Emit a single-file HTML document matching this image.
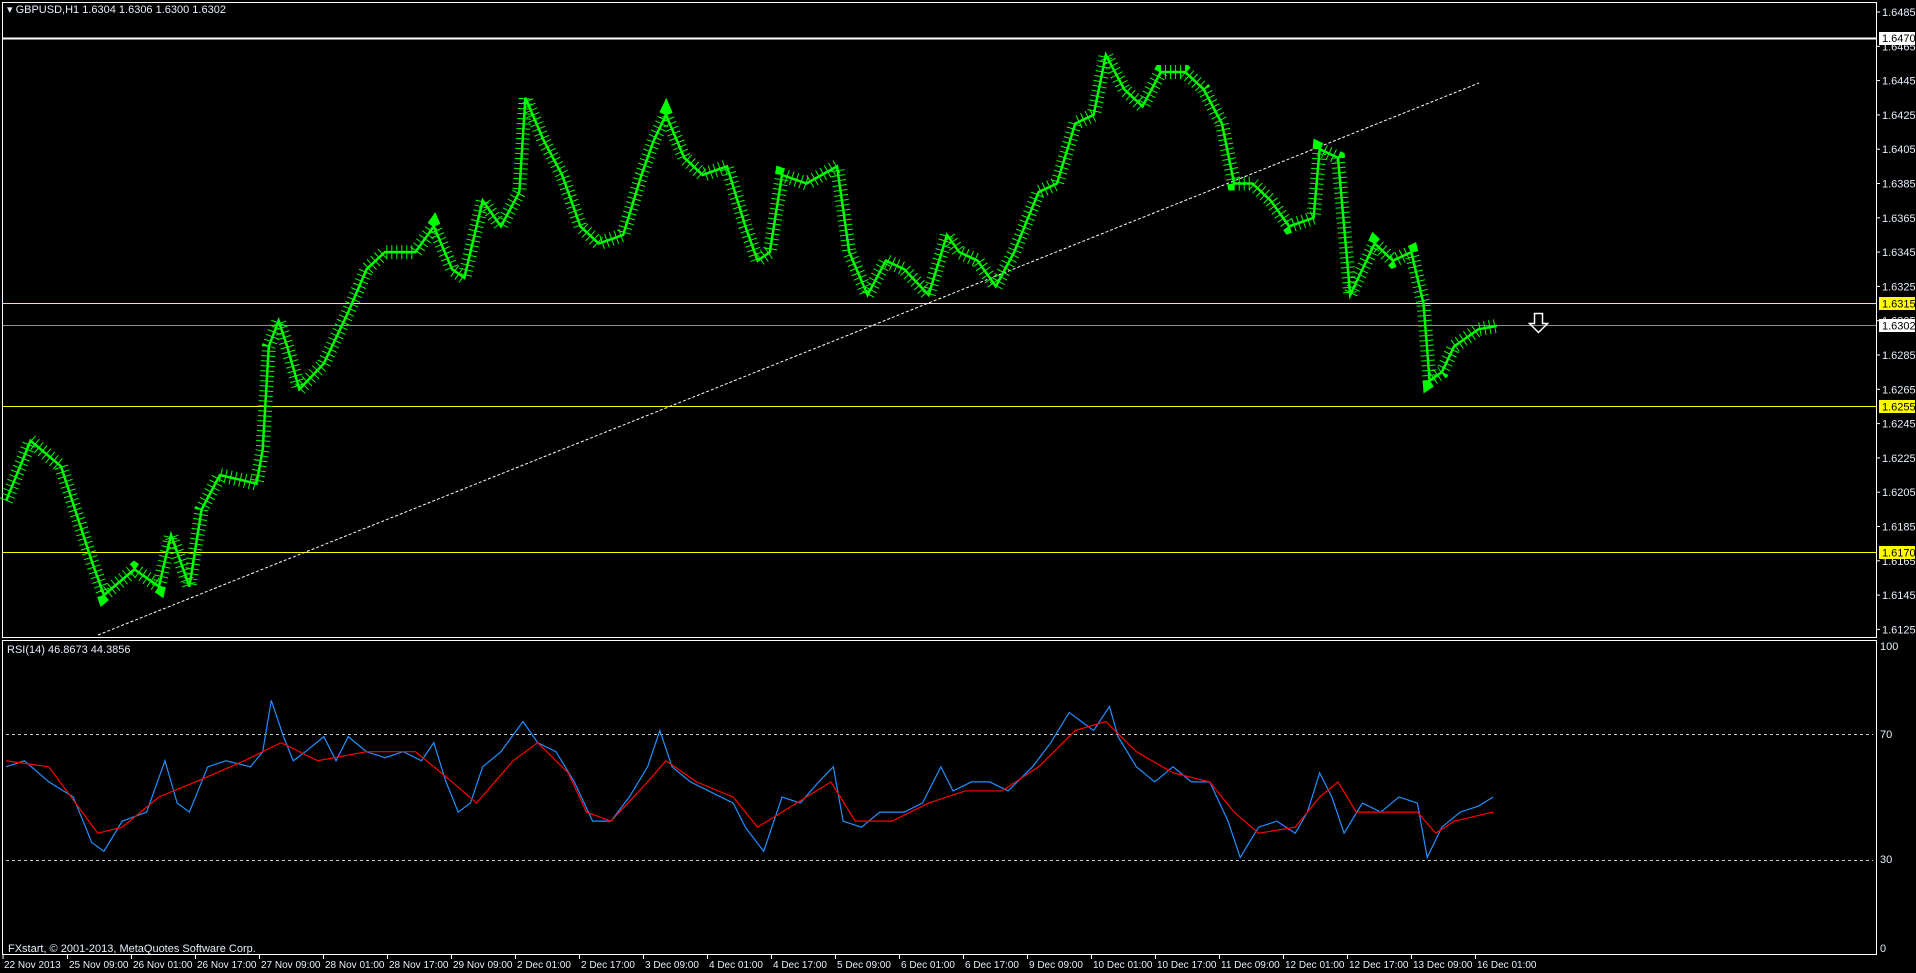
<!DOCTYPE html>
<html><head><meta charset="utf-8"><style>
html,body{margin:0;padding:0;background:#000;width:1916px;height:973px;overflow:hidden}
svg{display:block}
text{font-family:"Liberation Sans",sans-serif;font-size:11px;fill:#e6eefa}
.d{font-size:10px}
.k{fill:#000}
</style></head><body>
<svg width="1916" height="973" xmlns="http://www.w3.org/2000/svg">
<rect width="1916" height="973" fill="#000"/>
<rect x="2.5" y="2.5" width="1874" height="635" fill="none" stroke="#fff"/>
<rect x="2.5" y="640.5" width="1874" height="314" fill="none" stroke="#fff"/>
<line x1="3" x2="1876" y1="38.5" y2="38.5" stroke="#fff" stroke-width="2"/>
<line x1="3" x2="1876" y1="303.5" y2="303.5" stroke="#ffff00"/>
<line x1="3" x2="1876" y1="325.5" y2="325.5" stroke="#8a8f99"/>
<line x1="3" x2="1876" y1="406.5" y2="406.5" stroke="#ffff00"/>
<line x1="3" x2="1876" y1="552.5" y2="552.5" stroke="#ffff00"/>
<g stroke="#fff">
<line x1="1877" x2="1880" y1="12" y2="12"/><line x1="1877" x2="1880" y1="46.3" y2="46.3"/><line x1="1877" x2="1880" y1="80.6" y2="80.6"/><line x1="1877" x2="1880" y1="114.9" y2="114.9"/><line x1="1877" x2="1880" y1="149.2" y2="149.2"/><line x1="1877" x2="1880" y1="183.5" y2="183.5"/><line x1="1877" x2="1880" y1="217.8" y2="217.8"/><line x1="1877" x2="1880" y1="252.1" y2="252.1"/><line x1="1877" x2="1880" y1="286.4" y2="286.4"/><line x1="1877" x2="1880" y1="320.7" y2="320.7"/><line x1="1877" x2="1880" y1="355" y2="355"/><line x1="1877" x2="1880" y1="389.3" y2="389.3"/><line x1="1877" x2="1880" y1="423.6" y2="423.6"/><line x1="1877" x2="1880" y1="457.9" y2="457.9"/><line x1="1877" x2="1880" y1="492.2" y2="492.2"/><line x1="1877" x2="1880" y1="526.5" y2="526.5"/><line x1="1877" x2="1880" y1="560.8" y2="560.8"/><line x1="1877" x2="1880" y1="595.1" y2="595.1"/><line x1="1877" x2="1880" y1="629.4" y2="629.4"/>
</g>
<text x="1882" y="16">1.6485</text><text x="1882" y="50.3">1.6465</text><text x="1882" y="84.6">1.6445</text><text x="1882" y="118.9">1.6425</text><text x="1882" y="153.2">1.6405</text><text x="1882" y="187.5">1.6385</text><text x="1882" y="221.8">1.6365</text><text x="1882" y="256.1">1.6345</text><text x="1882" y="290.4">1.6325</text><text x="1882" y="324.7">1.6305</text><text x="1882" y="359">1.6285</text><text x="1882" y="393.3">1.6265</text><text x="1882" y="427.6">1.6245</text><text x="1882" y="461.9">1.6225</text><text x="1882" y="496.2">1.6205</text><text x="1882" y="530.5">1.6185</text><text x="1882" y="564.8">1.6165</text><text x="1882" y="599.1">1.6145</text><text x="1882" y="633.4">1.6125</text>
<rect x="1879" y="32" width="36" height="13" fill="#fff"/><text class="k" x="1882" y="42">1.6470</text>
<rect x="1879" y="297" width="36" height="13" fill="#ffff00"/><text class="k" x="1882" y="307.5">1.6315</text>
<rect x="1879" y="319" width="36" height="13" fill="#fff"/><text class="k" x="1882" y="329.5">1.6302</text>
<rect x="1879" y="400" width="36" height="13" fill="#ffff00"/><text class="k" x="1882" y="410.5">1.6255</text>
<rect x="1879" y="546" width="36" height="13" fill="#ffff00"/><text class="k" x="1882" y="556.5">1.6170</text>
<line x1="6" x2="1873" y1="734.5" y2="734.5" stroke="#ccc" stroke-dasharray="3,3"/>
<line x1="6" x2="1873" y1="860.5" y2="860.5" stroke="#ccc" stroke-dasharray="3,3"/>
<text x="1880" y="650">100</text><text x="1880" y="738">70</text><text x="1880" y="863">30</text><text x="1880" y="952">0</text>
<text x="7" y="653">RSI(14) 46.8673 44.3856</text>
<text x="7" y="13">▾ GBPUSD,H1  1.6304 1.6306 1.6300 1.6302</text>
<text x="8" y="952">FXstart, © 2001-2013, MetaQuotes Software Corp.</text>
<g stroke="#fff">
<line x1="3" x2="3" y1="955" y2="959"/><line x1="67.5" x2="67.5" y1="955" y2="959"/><line x1="131.5" x2="131.5" y1="955" y2="959"/><line x1="195.5" x2="195.5" y1="955" y2="959"/><line x1="259.5" x2="259.5" y1="955" y2="959"/><line x1="323.5" x2="323.5" y1="955" y2="959"/><line x1="387.5" x2="387.5" y1="955" y2="959"/><line x1="451.5" x2="451.5" y1="955" y2="959"/><line x1="515.5" x2="515.5" y1="955" y2="959"/><line x1="579.5" x2="579.5" y1="955" y2="959"/><line x1="643.5" x2="643.5" y1="955" y2="959"/><line x1="707.5" x2="707.5" y1="955" y2="959"/><line x1="771.5" x2="771.5" y1="955" y2="959"/><line x1="835.5" x2="835.5" y1="955" y2="959"/><line x1="899.5" x2="899.5" y1="955" y2="959"/><line x1="963.5" x2="963.5" y1="955" y2="959"/><line x1="1027.5" x2="1027.5" y1="955" y2="959"/><line x1="1091.5" x2="1091.5" y1="955" y2="959"/><line x1="1155.5" x2="1155.5" y1="955" y2="959"/><line x1="1219.5" x2="1219.5" y1="955" y2="959"/><line x1="1283.5" x2="1283.5" y1="955" y2="959"/><line x1="1347.5" x2="1347.5" y1="955" y2="959"/><line x1="1411.5" x2="1411.5" y1="955" y2="959"/><line x1="1475.5" x2="1475.5" y1="955" y2="959"/>
</g>
<g class="d">
<text class="d" x="4" y="968">22 Nov 2013</text><text class="d" x="69" y="968">25 Nov 09:00</text><text class="d" x="133" y="968">26 Nov 01:00</text><text class="d" x="197" y="968">26 Nov 17:00</text><text class="d" x="261" y="968">27 Nov 09:00</text><text class="d" x="325" y="968">28 Nov 01:00</text><text class="d" x="389" y="968">28 Nov 17:00</text><text class="d" x="453" y="968">29 Nov 09:00</text><text class="d" x="517" y="968">2 Dec 01:00</text><text class="d" x="581" y="968">2 Dec 17:00</text><text class="d" x="645" y="968">3 Dec 09:00</text><text class="d" x="709" y="968">4 Dec 01:00</text><text class="d" x="773" y="968">4 Dec 17:00</text><text class="d" x="837" y="968">5 Dec 09:00</text><text class="d" x="901" y="968">6 Dec 01:00</text><text class="d" x="965" y="968">6 Dec 17:00</text><text class="d" x="1029" y="968">9 Dec 09:00</text><text class="d" x="1093" y="968">10 Dec 01:00</text><text class="d" x="1157" y="968">10 Dec 17:00</text><text class="d" x="1221" y="968">11 Dec 09:00</text><text class="d" x="1285" y="968">12 Dec 01:00</text><text class="d" x="1349" y="968">12 Dec 17:00</text><text class="d" x="1413" y="968">13 Dec 09:00</text><text class="d" x="1477" y="968">16 Dec 01:00</text>
</g>
<line x1="98" y1="635" x2="1479" y2="83" stroke="#fff" stroke-dasharray="3,2"/>
<path d="M1534.5 313.5h8v10h5l-9 9l-9-9h5z" fill="none" stroke="#fff" stroke-width="1.5"/>
<g transform="translate(0,12) scale(1.2219,1.715)" fill="none" stroke="#00ff00">
<path vector-effect="non-scaling-stroke" stroke-width="14" stroke-dasharray="1,4" d="M5 285L25 250L50 265L75 320L85 340L110 325L130 335L140 305L155 335L165 290L180 270L210 275L215 255L220 195L228 180L235 195L245 220L265 205L285 175L300 150L315 140L340 140L355 125L370 150L380 155L395 110L410 125L425 105L430 50L445 75L460 95L475 125L490 135L510 130L525 95L535 75L545 60L560 85L575 95L595 90L610 125L620 145L630 140L640 95L660 100L685 90L695 140L710 165L725 145L740 150L760 165L775 130L785 140L800 145L815 160L830 140L850 105L865 100L880 65L895 60L905 25L920 45L935 55L950 35L970 35L985 45L1000 65L1010 100L1025 100L1040 110L1055 125L1075 120L1080 80L1095 85L1100 125L1105 165L1115 150L1125 135L1140 145L1155 140L1165 170L1170 215L1180 210L1190 195L1210 185L1225 183"/>
<path vector-effect="non-scaling-stroke" stroke-width="2.5" d="M5 285L25 250L50 265L75 320L85 340L110 325L130 335L140 305L155 335L165 290L180 270L210 275L215 255L220 195L228 180L235 195L245 220L265 205L285 175L300 150L315 140L340 140L355 125L370 150L380 155L395 110L410 125L425 105L430 50L445 75L460 95L475 125L490 135L510 130L525 95L535 75L545 60L560 85L575 95L595 90L610 125L620 145L630 140L640 95L660 100L685 90L695 140L710 165L725 145L740 150L760 165L775 130L785 140L800 145L815 160L830 140L850 105L865 100L880 65L895 60L905 25L920 45L935 55L950 35L970 35L985 45L1000 65L1010 100L1025 100L1040 110L1055 125L1075 120L1080 80L1095 85L1100 125L1105 165L1115 150L1125 135L1140 145L1155 140L1165 170L1170 215L1180 210L1190 195L1210 185L1225 183"/>
</g>
<g transform="translate(0,948) scale(1.2219,-3.02)" fill="none">
<path vector-effect="non-scaling-stroke" stroke="#1e90ff" stroke-width="1.2" d="M5 60L20 62L40 55L60 50L75 35L85 32L100 42L120 45L135 62L145 48L155 45L170 60L185 62L205 60L215 65L222 82L232 70L240 62L250 65L265 70L275 62L285 70L300 65L315 63L330 65L345 62L355 68L365 55L375 45L385 48L395 60L410 65L428 75L440 68L455 65L470 55L485 42L500 42L515 50L530 60L540 72L550 60L565 55L580 52L600 48L610 40L625 32L640 50L655 48L670 55L682 60L690 42L705 40L720 45L740 45L755 48L770 60L780 52L795 55L810 55L825 52L845 60L860 68L875 78L885 75L895 72L908 80L915 70L930 60L945 55L960 60L975 55L990 55L1005 42L1015 30L1030 40L1045 42L1060 38L1070 45L1080 58L1090 50L1100 38L1115 48L1130 45L1145 50L1160 48L1168 30L1180 40L1195 45L1210 47L1222 50"/>
<path vector-effect="non-scaling-stroke" stroke="#ff0000" stroke-width="1.2" d="M5 62L40 60L80 38L100 40L130 50L160 55L200 62L230 68L260 62L300 65L340 65L370 55L390 48L420 62L440 68L465 58L480 45L500 42L530 55L545 62L570 55L600 50L620 40L640 45L680 55L700 42L730 42L760 48L790 52L820 52L850 60L880 72L905 75L930 65L960 58L990 55L1010 45L1030 38L1060 40L1080 50L1095 55L1110 45L1130 45L1160 45L1175 38L1190 42L1222 45"/>
</g>
</svg>
</body></html>
